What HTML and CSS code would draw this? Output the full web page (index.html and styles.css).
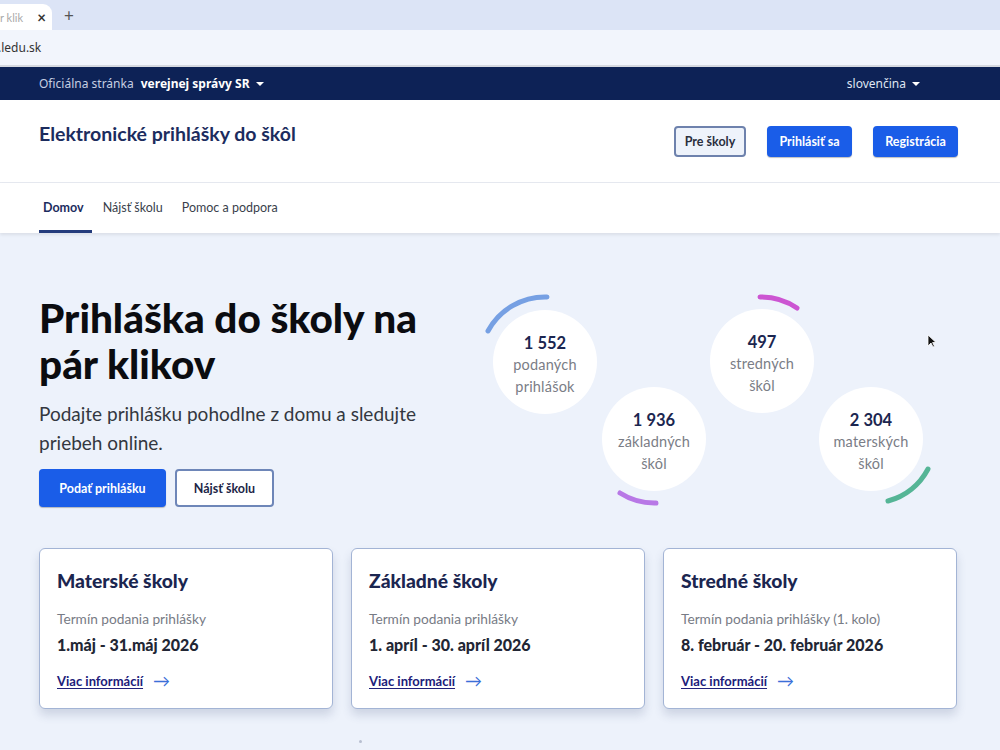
FILE: index.html
```html
<!DOCTYPE html>
<html lang="sk">
<head>
<meta charset="utf-8">
<title>Elektronické prihlášky do škôl</title>
<link rel="stylesheet" href="styles.css">
</head>
<body>
<div class="tabbar">
  <div class="tab"><span class="tab-title">r klik</span><span class="tab-close">×</span></div>
  <span class="tab-new">+</span>
</div>
<div class="addressbar"><span class="url">.ledu.sk</span></div>

<div class="govbar">
  <div class="gov-left"><span class="gov-light">Oficiálna stránka</span> <span class="gov-bold">verejnej správy SR</span><span class="caret"></span></div>
  <div class="gov-right"><span class="gov-lang">slovenčina</span><span class="caret"></span></div>
</div>

<header class="header">
  <div class="brand">Elektronické prihlášky do škôl</div>
  <div class="header-actions">
    <a class="btn btn-outline btn-sm">Pre školy</a>
    <a class="btn btn-primary btn-sm">Prihlásiť sa</a>
    <a class="btn btn-primary btn-sm">Registrácia</a>
  </div>
</header>

<nav class="nav">
  <a class="nav-item active">Domov</a>
  <a class="nav-item">Nájsť školu</a>
  <a class="nav-item">Pomoc a podpora</a>
</nav>

<main class="main">
  <section class="hero">
    <div class="hero-text">
      <h1>Prihláška do školy na pár klikov</h1>
      <p class="lead">Podajte prihlášku pohodlne z domu a sledujte priebeh online.</p>
      <div class="hero-actions">
        <a class="btn btn-primary btn-lg">Podať prihlášku</a>
        <a class="btn btn-white btn-lg">Nájsť školu</a>
      </div>
    </div>
    <div class="stats">
      <svg class="arcs" width="460" height="230" viewBox="0 0 460 230">
        <path d="M 8 42 A 65 65 0 0 1 67 8" stroke="#76a0e3"/>
        <path d="M 280 8 A 64 64 0 0 1 317 19" stroke="#cc55d2"/>
        <path d="M 176 214 A 64 64 0 0 1 140 204" stroke="#b878e6"/>
        <path d="M 448 180 A 64 64 0 0 1 408 212" stroke="#55b596"/>
      </svg>
      <div class="stat s1"><b>1 552</b><span>podaných<br>prihlášok</span></div>
      <div class="stat s2"><b>1 936</b><span>základných<br>škôl</span></div>
      <div class="stat s3"><b>497</b><span>stredných<br>škôl</span></div>
      <div class="stat s4"><b>2 304</b><span>materských<br>škôl</span></div>
      <svg class="cursor" width="10" height="14" viewBox="0 0 10 14"><path d="M1 1 L1 12 L4 9 L6 13 L7.5 12.3 L5.6 8.5 L9 8.5 Z" fill="#111" stroke="#fff" stroke-width="0.8"/></svg>
    </div>
  </section>

  <section class="cards">
    <div class="card">
      <h2>Materské školy</h2>
      <div class="card-label">Termín podania prihlášky</div>
      <div class="card-date">1.máj - 31.máj 2026</div>
      <a class="card-link"><span>Viac informácií</span><span class="arrow">→</span></a>
    </div>
    <div class="card">
      <h2>Základné školy</h2>
      <div class="card-label">Termín podania prihlášky</div>
      <div class="card-date">1. apríl - 30. apríl 2026</div>
      <a class="card-link"><span>Viac informácií</span><span class="arrow">→</span></a>
    </div>
    <div class="card">
      <h2>Stredné školy</h2>
      <div class="card-label">Termín podania prihlášky (1. kolo)</div>
      <div class="card-date">8. február - 20. február 2026</div>
      <a class="card-link"><span>Viac informácií</span><span class="arrow">→</span></a>
    </div>
  </section>
  <div class="dot"></div>
</main>
</body>
</html>
```

FILE: styles.css
```css
* { box-sizing: border-box; }
html, body { margin: 0; padding: 0; }
body {
  width: 1000px;
  height: 750px;
  overflow: hidden;
  font-family: Lato, "Noto Sans", "Liberation Sans", sans-serif;
  background: #edf2fb;
  color: #222;
}
a { text-decoration: none; cursor: pointer; white-space: nowrap; }

/* browser chrome */
.tabbar {
  height: 30px;
  background: #dce4f6;
  display: flex;
  align-items: flex-end;
}
.tab {
  width: 52px;
  height: 26px;
  background: #fff;
  border-top-right-radius: 9px;
  display: flex;
  align-items: center;
  justify-content: space-between;
  padding: 0 6px 0 0;
  font-size: 11px;
  color: #666;
}
.tab-title { color: #aaa; }
.tab-close { font-size: 15px; color: #333; font-weight: bold; }
.tab-new { font-size: 17px; color: #555; margin: 0 0 4px 12px; }
.addressbar {
  height: 37px;
  background: #f2f5fc;
  display: flex;
  align-items: center;
  border-bottom: 2px solid #d6d9e0;
  font-size: 12px;
  color: #333;
  font-family: "Noto Sans", sans-serif;
}
.url { margin-left: -2px; }

/* gov bar */
.govbar {
  height: 33px;
  background: #0d2256;
  color: #d5dcec;
  display: flex;
  align-items: center;
  justify-content: space-between;
  padding: 0 80px 0 39px;
  font-size: 12px;
  font-family: "Noto Sans", sans-serif;
}
.gov-light { color: #c5cee2; }
.gov-bold { font-weight: bold; color: #fff; margin-left: 4px; }
.caret {
  display: inline-block;
  width: 0; height: 0;
  border-left: 4px solid transparent;
  border-right: 4px solid transparent;
  border-top: 4px solid #fff;
  margin-left: 6px;
  vertical-align: 2px;
}
.gov-lang { color: #dfe5f2; }

/* header */
.header {
  height: 83px;
  background: #fff;
  border-bottom: 1px solid #e6e9f0;
  display: flex;
  justify-content: space-between;
  align-items: flex-start;
  padding: 0 42px 0 39px;
}
.brand {
  font-size: 19.5px;
  font-weight: bold;
  color: #1c2c5e;
  margin-top: 22px;
}
.header-actions {
  display: flex;
  gap: 21px;
  margin-top: 26px;
}
.btn {
  display: inline-flex;
  align-items: center;
  justify-content: center;
  font-weight: bold;
  border-radius: 4px;
  font-size: 12.5px;
}
.btn-sm { height: 31px; padding: 0 4px; }
.btn-primary { background: #1a5de8; color: #fff; border: 2px solid #1a5de8; box-shadow: 0 1px 1px rgba(0,0,0,0.25); }
.btn-outline { background: #eef3fb; color: #2a2f3f; border: 2px solid #6e82ad; }
.btn-white { background: #fff; color: #1c2547; border: 2px solid #6e86b8; }
.header-actions .btn:nth-child(1) { width: 72px; }
.header-actions .btn:nth-child(2) { width: 85px; }
.header-actions .btn:nth-child(3) { width: 85px; }

/* nav */
.nav {
  height: 50px;
  background: #fff;
  display: flex;
  padding-left: 39px;
  box-shadow: 0 2px 3px rgba(0,0,0,0.08);
  position: relative;
}
.nav-item {
  font-size: 12.5px;
  color: #3a3f4c;
  display: flex;
  align-items: center;
  height: 50px;
  border-bottom: 3px solid transparent;
  padding-top: 2px;
  margin-right: 19px;
}
.nav-item.active {
  font-weight: bold;
  color: #1c2c5e;
  border-bottom: 3px solid #243c7c;
  padding: 2px 8px 0 4px;
  margin-right: 11px;
}

/* hero */
.main { padding: 0 42px 0 39px; }
.hero {
  display: flex;
  padding-top: 56px;
  height: 315px;
}
.hero-text { width: 441px; flex: none; }
h1 {
  font-size: 40.5px;
  line-height: 46px;
  font-weight: 900;
  color: #0b0c10;
  margin: 6px 0 0 0;
}
.lead {
  font-size: 19px;
  line-height: 29px;
  color: #333740;
  margin: 12px 0 0 0;
}
.hero-actions {
  display: flex;
  gap: 9px;
  margin-top: 12px;
}
.btn-lg { height: 38px; }
.hero-actions .btn-primary { width: 127px; }
.hero-actions .btn-white { width: 99px; }

.stats {
  position: relative;
  flex: none;
  width: 460px;
  height: 230px;
}
.arcs { position: absolute; left: 0; top: 0; }
.arcs path { fill: none; stroke-width: 5; stroke-linecap: round; }
.stat {
  position: absolute;
  width: 104px;
  height: 104px;
  border-radius: 50%;
  background: #fff;
  display: flex;
  flex-direction: column;
  align-items: center;
  justify-content: center;
  text-align: center;
  padding-top: 5px;
}
.stat b {
  font-size: 16.5px;
  color: #1b2650;
  line-height: 22px;
}
.stat span {
  font-size: 14.5px;
  color: #7a7d86;
  line-height: 22px;
  letter-spacing: 0.2px;
}
.s1 { left: 13px; top: 21px; }
.s2 { left: 122px; top: 98px; }
.s3 { left: 230px; top: 20px; }
.s4 { left: 339px; top: 98px; }
.cursor { position: absolute; left: 447px; top: 45px; }

/* cards */
.cards {
  display: flex;
  gap: 18px;
}
.card {
  width: 294px;
  height: 161px;
  background: #fff;
  border: 1.5px solid #a3b4d5;
  border-radius: 6px;
  box-shadow: 0 6px 10px rgba(60, 80, 120, 0.18);
  padding: 20px 17px 0 17px;
}
.card h2 {
  font-size: 19.3px;
  font-weight: 900;
  color: #1b2650;
  margin: 0;
  line-height: 24px;
}
.card-label {
  font-size: 13.7px;
  color: #777b85;
  margin-top: 17px;
}
.card-date {
  font-size: 16px;
  font-weight: 900;
  color: #222634;
  margin-top: 8px;
}
.card-link {
  display: flex;
  align-items: center;
  gap: 10px;
  margin-top: 16px;
  font-size: 13px;
  font-weight: bold;
  color: #20207a;
}
.card-link span:first-child { text-decoration: underline; text-underline-offset: 2px; }
.arrow { color: #3b6fd8; font-size: 17px; font-weight: normal; }
.dot {
  width: 3px; height: 3px; border-radius: 50%;
  background: #b8bfd0;
  margin: 31px 0 0 320px;
}
```
